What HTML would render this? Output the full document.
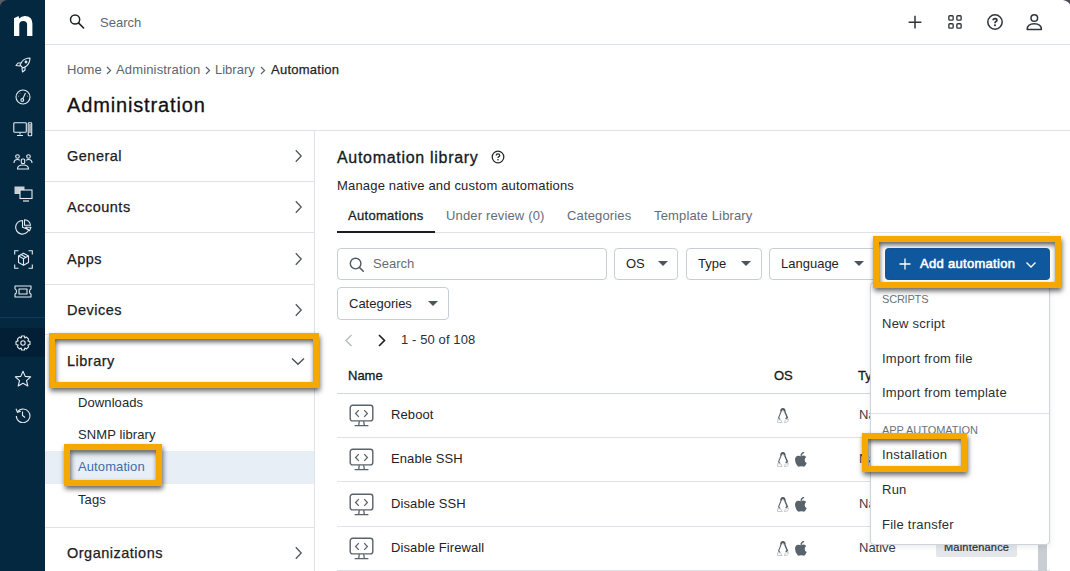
<!DOCTYPE html>
<html><head><meta charset="utf-8">
<style>
*{box-sizing:border-box;margin:0;padding:0}
html,body{width:1070px;height:571px;overflow:hidden;background:#fff;font-family:"Liberation Sans",sans-serif;color:#1f2328}
.abs{position:absolute}
#side{position:absolute;left:0;top:0;width:45px;height:571px;background:#032840}
#side svg{position:absolute}
#hdr{position:absolute;left:45px;top:0;width:1025px;height:45px;border-bottom:1px solid #dde2e8;background:#fff}
.t{position:absolute;white-space:nowrap;line-height:1}
.line{position:absolute;background:#dfe3e8}
.nav{position:absolute;left:67px;font-size:14.5px;font-weight:400;color:#1c2024;letter-spacing:0.5px;-webkit-text-stroke:0.25px #1c2024}
.sub{position:absolute;left:78px;font-size:13px;color:#23282d;letter-spacing:0.1px}
.chev{position:absolute}
.bc{font-size:13px;color:#5b6570}
.btn{position:absolute;border:1px solid #c9ced4;border-radius:4px;background:#fff}
.tri{position:absolute;width:0;height:0;border-left:5px solid transparent;border-right:5px solid transparent;border-top:5px solid #4c555d}
.hl{position:absolute;border:6px solid #f5a900;box-shadow:1px 3px 5px rgba(0,0,0,.6), inset 1px 3px 5px rgba(0,0,0,.62)}
.mi{position:absolute;left:882px;font-size:13px;color:#2a2f35;letter-spacing:0.25px}
.row{position:absolute;left:348px;font-size:13px;color:#23282d;letter-spacing:0.05px}
</style></head><body>

<div id="side">
  <!-- logo n -->
  <svg style="left:13px;top:15px" width="20" height="22" viewBox="0 0 20 22">
    <path d="M1 3.2 L5.6 1 L6.1 3.4 Q8.4 0.9 11.8 0.9 Q19.4 0.9 19.4 8.6 L19.4 21 L14.1 21 L14.1 9.6 Q14.1 5.9 10.3 5.9 Q6.3 5.9 6.3 9.6 L6.3 21 L1 21 Z" fill="#fff"/>
  </svg>

  <!-- rocket -->
  <svg style="left:15px;top:57px" width="16" height="16" viewBox="0 0 16 16"><g fill="none" stroke="#e6ebef" stroke-width="1.1" stroke-linejoin="round"><path d="M15 1 Q10 1 7 4.5 L5 8 L8 11 L11.5 9 Q15 6 15 1 Z"/><path d="M6 6 L3 6 L1 8.5 L5 9"/><path d="M10 10 L10 13 L7.5 15 L7 11"/><circle cx="11" cy="5" r="0.9"/></g></svg>
  <!-- gauge -->
  <svg style="left:15px;top:89px" width="16" height="16" viewBox="0 0 16 16"><g fill="none" stroke="#e6ebef" stroke-width="1.1"><circle cx="8" cy="8" r="7"/><circle cx="7.3" cy="11" r="1.4"/><path d="M7.8 9.7 L10.5 4"/><path d="M3.5 7 L4 7.2 M12.5 7 L12 7.2 M5 4 L5.3 4.4"/></g></svg>
  <!-- devices -->
  <svg style="left:13px;top:122px" width="20" height="15" viewBox="0 0 20 15"><g fill="none" stroke="#e6ebef" stroke-width="1.1"><rect x="0.8" y="0.8" width="12.5" height="9.5" rx="0.8"/><path d="M7 10.5 V12.5 M4 13.5 H10"/><rect x="15.2" y="0.8" width="3.5" height="13" rx="0.8"/></g><rect x="15.8" y="2" width="2.3" height="9" fill="#9aa3ab"/></svg>
  <!-- people -->
  <svg style="left:13px;top:154px" width="20" height="16" viewBox="0 0 20 16"><g fill="none" stroke="#e6ebef" stroke-width="1.1"><circle cx="4.5" cy="2.5" r="1.8"/><circle cx="15.5" cy="2.5" r="1.8"/><path d="M1 9 Q1 5.5 4.5 5.5 Q6 5.5 6.8 6.3"/><path d="M19 9 Q19 5.5 15.5 5.5 Q14 5.5 13.2 6.3"/><rect x="8.3" y="5" width="3.4" height="4.5" rx="1"/><path d="M4.5 15 Q4.5 11 10 11 Q15.5 11 15.5 15 Z"/></g></svg>
  <!-- windows -->
  <svg style="left:14px;top:186px" width="19" height="16" viewBox="0 0 19 16"><rect x="0.5" y="0.5" width="10" height="7.5" fill="#c9d0d6"/><rect x="6" y="4" width="12" height="8.5" fill="#032840" stroke="#e6ebef" stroke-width="1.1"/><path d="M9 15 H15" stroke="#e6ebef" stroke-width="1.2"/></svg>
  <!-- pie -->
  <svg style="left:15px;top:219px" width="17" height="16" viewBox="0 0 17 16"><g fill="none" stroke="#e6ebef" stroke-width="1.1" stroke-linejoin="round"><path d="M7.5 1.5 A6.8 6.8 0 1 0 13.8 10.8 L7.5 8.3 Z"/><path d="M9.5 0.7 A6.5 6.5 0 0 1 15.5 6.3 L9.5 6.3 Z"/><path d="M10.5 8.3 L16 8.3 L14.5 11.8 Z"/></g></svg>
  <!-- box -->
  <svg style="left:14px;top:250px" width="19" height="19" viewBox="0 0 19 19"><g fill="none" stroke="#e6ebef" stroke-width="1.1"><path d="M0.7 4.5 V0.7 H4.5 M14.5 0.7 H18.3 V4.5 M18.3 14.5 V18.3 H14.5 M4.5 18.3 H0.7 V14.5"/><path d="M9.5 3.3 L14.5 6 V12.5 L9.5 15.3 L4.5 12.5 V6 Z" stroke-linejoin="round"/><path d="M4.5 6 L9.5 8.7 L14.5 6 M9.5 8.7 V15.3 M7 4.6 L12 7.4"/></g></svg>
  <!-- ticket -->
  <svg style="left:14px;top:285px" width="18" height="13" viewBox="0 0 18 13"><g fill="none" stroke="#e6ebef" stroke-width="1.1" stroke-linejoin="round"><path d="M1 1 H17 V4 Q15.5 4.3 15.5 6.5 Q15.5 8.7 17 9 V12 H1 V9 Q2.5 8.7 2.5 6.5 Q2.5 4.3 1 4 Z"/><rect x="5" y="4" width="8" height="5"/></g></svg>
  <div style="position:absolute;left:0;top:317px;width:45px;height:1px;background:#0f3b5c"></div>
  <div style="position:absolute;left:0;top:328px;width:45px;height:29px;background:#021f35"></div>
  <!-- gear -->
  <svg style="left:15px;top:335px" width="16" height="16" viewBox="0 0 16 16"><g fill="none" stroke="#e6ebef" stroke-width="1.1" stroke-linejoin="round"><path d="M6.6 1 H9.4 L9.9 3 L11.6 2.1 L13.6 4.1 L12.9 5.9 L15 6.5 V9.5 L12.9 10.1 L13.6 11.9 L11.6 13.9 L9.9 13 L9.4 15 H6.6 L6.1 13 L4.4 13.9 L2.4 11.9 L3.1 10.1 L1 9.5 V6.5 L3.1 5.9 L2.4 4.1 L4.4 2.1 L6.1 3 Z"/><circle cx="8" cy="8" r="2.2"/></g></svg>
  <!-- star -->
  <svg style="left:14px;top:370px" width="18" height="18" viewBox="0 0 18 18"><path d="M9 1.3 L11.2 6.4 L16.7 6.9 L12.5 10.6 L13.8 16 L9 13.2 L4.2 16 L5.5 10.6 L1.3 6.9 L6.8 6.4 Z" fill="none" stroke="#e6ebef" stroke-width="1.1" stroke-linejoin="round"/></svg>
  <!-- history -->
  <svg style="left:15px;top:407px" width="16" height="16" viewBox="0 0 16 16"><g fill="none" stroke="#e6ebef" stroke-width="1.1"><path d="M2.5 5 A6.8 6.8 0 1 1 1.3 9"/><path d="M1 1.8 L2.5 5.3 L5.8 4.2"/><path d="M7.5 4.5 V8.5 L10 10.5"/></g></svg>
</div>

<div id="hdr"></div>
<!-- header right icons -->
<svg class="abs" style="left:907px;top:14px" width="16" height="16" viewBox="0 0 16 16"><path d="M8 1.8 V14.6 M1.6 8.2 H14.4" stroke="#2f353a" stroke-width="1.5"/></svg>
<svg class="abs" style="left:947px;top:14px" width="16" height="16" viewBox="0 0 16 16"><g fill="none" stroke="#2f353a" stroke-width="1.35"><rect x="1.85" y="1.75" width="4.3" height="4.3" rx="0.9"/><rect x="9.85" y="1.75" width="4.3" height="4.3" rx="0.9"/><rect x="1.85" y="9.75" width="4.3" height="4.3" rx="0.9"/><rect x="9.85" y="9.75" width="4.3" height="4.3" rx="0.9"/></g></svg>
<svg class="abs" style="left:986px;top:13px" width="18" height="18" viewBox="0 0 18 18"><circle cx="9" cy="9" r="7.2" fill="none" stroke="#2f353a" stroke-width="1.5"/><path d="M7.1 7.3 Q7.1 5.6 9 5.6 Q10.9 5.6 10.9 7.2 Q10.9 8.1 9.9 8.6 Q9 9.1 9 10.2" fill="none" stroke="#2f353a" stroke-width="1.7"/><circle cx="9" cy="12.3" r="1.05" fill="#2f353a"/></svg>
<svg class="abs" style="left:1026px;top:13px" width="17" height="18" viewBox="0 0 17 18"><circle cx="8.3" cy="5" r="3.3" fill="none" stroke="#2f353a" stroke-width="1.5"/><path d="M1.2 16.6 Q1.2 10.8 8.3 10.8 Q15.4 10.8 15.4 16.6 Z" fill="none" stroke="#2f353a" stroke-width="1.5" stroke-linejoin="round"/></svg>

<!-- header search -->
<svg class="abs" style="left:69px;top:13px" width="17" height="17" viewBox="0 0 17 17"><circle cx="6.1" cy="6.5" r="4.6" fill="none" stroke="#1e2226" stroke-width="1.5"/><path d="M9.5 9.9 L14.6 15" stroke="#1e2226" stroke-width="1.6" stroke-linecap="round"/></svg>
<div class="t" style="left:100px;top:16px;font-size:13px;color:#5d6670">Search</div>

<!-- breadcrumb -->
<div class="t bc" style="left:67px;top:63px">Home</div>
<svg class="abs" style="left:106px;top:66px" width="6" height="9" viewBox="0 0 6 9"><path d="M1 1 L4.6 4.5 L1 8" fill="none" stroke="#5b6570" stroke-width="1.2"/></svg>
<div class="t bc" style="left:116px;top:63px;letter-spacing:0.15px">Administration</div>
<svg class="abs" style="left:205px;top:66px" width="6" height="9" viewBox="0 0 6 9"><path d="M1 1 L4.6 4.5 L1 8" fill="none" stroke="#5b6570" stroke-width="1.2"/></svg>
<div class="t bc" style="left:215px;top:63px">Library</div>
<svg class="abs" style="left:260px;top:66px" width="6" height="9" viewBox="0 0 6 9"><path d="M1 1 L4.6 4.5 L1 8" fill="none" stroke="#5b6570" stroke-width="1.2"/></svg>
<div class="t bc" style="left:271px;top:63px;color:#1f2328;letter-spacing:0.25px;-webkit-text-stroke:0.25px #1f2328">Automation</div>
<div class="t" style="left:67px;top:95px;font-size:20px;color:#111;letter-spacing:0.85px;-webkit-text-stroke:0.3px #111">Administration</div>

<div class="line" style="left:45px;top:130px;width:1025px;height:1px"></div>
<div class="line" style="left:314px;top:131px;width:1px;height:440px"></div>

<!-- left nav -->
<div class="nav t" style="top:149px">General</div>
<div class="line" style="left:45px;top:181px;width:269px;height:1px"></div>
<div class="nav t" style="top:200px">Accounts</div>
<div class="line" style="left:45px;top:232px;width:269px;height:1px"></div>
<div class="nav t" style="top:252px">Apps</div>
<div class="line" style="left:45px;top:284px;width:269px;height:1px"></div>
<div class="nav t" style="top:303px">Devices</div>
<div class="line" style="left:45px;top:334px;width:269px;height:1px"></div>
<div class="nav t" style="top:354px">Library</div>
<div class="sub t" style="top:396px">Downloads</div>
<div class="sub t" style="top:428px">SNMP library</div>
<div class="abs" style="left:45px;top:451px;width:269px;height:33px;background:#e8eef6"></div>
<div class="sub t" style="top:460px;color:#3a6eae">Automation</div>
<div class="sub t" style="top:493px">Tags</div>
<div class="line" style="left:45px;top:527px;width:269px;height:1px"></div>
<div class="nav t" style="top:546px">Organizations</div>

<!-- nav chevrons -->
<svg class="abs" style="left:294px;top:149px" width="9" height="14" viewBox="0 0 9 14"><path d="M1.8 1.3 L7.2 7 L1.8 12.7" fill="none" stroke="#4f575f" stroke-width="1.3"/></svg>
<svg class="abs" style="left:294px;top:200px" width="9" height="14" viewBox="0 0 9 14"><path d="M1.8 1.3 L7.2 7 L1.8 12.7" fill="none" stroke="#4f575f" stroke-width="1.3"/></svg>
<svg class="abs" style="left:294px;top:252px" width="9" height="14" viewBox="0 0 9 14"><path d="M1.8 1.3 L7.2 7 L1.8 12.7" fill="none" stroke="#4f575f" stroke-width="1.3"/></svg>
<svg class="abs" style="left:294px;top:303px" width="9" height="14" viewBox="0 0 9 14"><path d="M1.8 1.3 L7.2 7 L1.8 12.7" fill="none" stroke="#4f575f" stroke-width="1.3"/></svg>
<svg class="abs" style="left:294px;top:546px" width="9" height="14" viewBox="0 0 9 14"><path d="M1.8 1.3 L7.2 7 L1.8 12.7" fill="none" stroke="#4f575f" stroke-width="1.3"/></svg>
<svg class="abs" style="left:291px;top:357px" width="14" height="9" viewBox="0 0 14 9"><path d="M1 1.5 L7 7.3 L13 1.5" fill="none" stroke="#4a525a" stroke-width="1.4"/></svg>

<!-- main content -->
<div class="t" style="left:337px;top:150px;font-size:16px;color:#15191d;letter-spacing:0.7px;-webkit-text-stroke:0.3px #15191d">Automation library</div>
<svg class="abs" style="left:491px;top:150px" width="14" height="14" viewBox="0 0 14 14"><circle cx="7" cy="7" r="5.8" fill="none" stroke="#22272b" stroke-width="1.25"/><path d="M5.3 5.6 Q5.3 3.9 7 3.9 Q8.7 3.9 8.7 5.4 Q8.7 6.2 7.8 6.7 Q7 7.1 7 8" fill="none" stroke="#22272b" stroke-width="1.3"/><circle cx="7" cy="9.8" r="0.8" fill="#22272b"/></svg>
<div class="t" style="left:337px;top:179px;font-size:13px;color:#1f2328;letter-spacing:0.18px">Manage native and custom automations</div>

<!-- tabs -->
<div class="t" style="left:348px;top:209px;font-size:13px;color:#1b1f23;letter-spacing:0.3px;-webkit-text-stroke:0.3px #1b1f23">Automations</div>
<div class="t" style="left:446px;top:209px;font-size:13px;color:#646d76;letter-spacing:0.15px">Under review (0)</div>
<div class="t" style="left:567px;top:209px;font-size:13px;color:#646d76;letter-spacing:0.15px">Categories</div>
<div class="t" style="left:654px;top:209px;font-size:13px;color:#646d76;letter-spacing:0.15px">Template Library</div>
<div class="line" style="left:337px;top:232px;width:713px;height:1px"></div>
<div class="abs" style="left:337px;top:231px;width:98px;height:2px;background:#1b1f23"></div>

<!-- filters -->
<div class="btn" style="left:337px;top:248px;width:270px;height:32px"></div>
<svg class="abs" style="left:349px;top:257px" width="16" height="16" viewBox="0 0 16 16"><circle cx="6.6" cy="6.6" r="5.3" fill="none" stroke="#4f5860" stroke-width="1.4"/><path d="M10.5 10.5 L14.3 14.3" stroke="#4f5860" stroke-width="1.5" stroke-linecap="round"/></svg>
<div class="t" style="left:373px;top:257px;font-size:13px;color:#646d76">Search</div>

<div class="btn" style="left:614px;top:248px;width:64px;height:32px"></div>
<div class="t" style="left:626px;top:257px;font-size:13px;color:#1f2328">OS</div>
<div class="tri" style="left:658px;top:261px"></div>
<div class="btn" style="left:686px;top:248px;width:76px;height:32px"></div>
<div class="t" style="left:698px;top:257px;font-size:13px;color:#1f2328">Type</div>
<div class="tri" style="left:741px;top:261px"></div>
<div class="btn" style="left:769px;top:248px;width:108px;height:32px"></div>
<div class="t" style="left:781px;top:257px;font-size:13px;color:#1f2328">Language</div>
<div class="tri" style="left:854px;top:261px"></div>

<div class="btn" style="left:337px;top:287px;width:112px;height:33px"></div>
<div class="t" style="left:349px;top:297px;font-size:13px;color:#1f2328">Categories</div>
<div class="tri" style="left:428px;top:301px"></div>

<!-- pagination -->
<svg class="abs" style="left:344px;top:334px" width="10" height="13" viewBox="0 0 10 13"><path d="M7.5 1 L2 6.5 L7.5 12" fill="none" stroke="#b4bac1" stroke-width="1.4"/></svg>
<svg class="abs" style="left:377px;top:334px" width="10" height="13" viewBox="0 0 10 13"><path d="M2 1 L7.5 6.5 L2 12" fill="none" stroke="#1b1f23" stroke-width="1.6"/></svg>
<div class="t" style="left:401px;top:333px;font-size:13px;color:#2a3036;letter-spacing:0.1px">1 - 50 of 108</div>

<!-- table -->
<div class="t" style="left:348px;top:369px;font-size:13px;color:#15191d;-webkit-text-stroke:0.3px #15191d">Name</div>
<div class="t" style="left:774px;top:369px;font-size:13px;color:#15191d;-webkit-text-stroke:0.3px #15191d">OS</div>
<div class="t" style="left:858px;top:369px;font-size:13px;color:#15191d;-webkit-text-stroke:0.3px #15191d">Type</div>
<div class="line" style="left:337px;top:393px;width:713px;height:1px;background:#d3d8de"></div>
<svg class="abs" style="left:349px;top:404px" width="25" height="23" viewBox="0 0 25 23"><rect x="1.2" y="1.3" width="22.6" height="15.6" rx="2.4" fill="none" stroke="#59636c" stroke-width="1.4"/><path d="M9.8 6.1 L6.6 9.5 L9.8 12.9 M15.2 6.1 L18.4 9.5 L15.2 12.9" fill="none" stroke="#59636c" stroke-width="1.25"/><path d="M10.3 17.2 L9.7 21.3 M14.7 17.2 L15.3 21.3 M5.6 21.6 H19.4" fill="none" stroke="#59636c" stroke-width="1.3"/></svg>
<div class="t" style="left:391px;top:408px;font-size:13px;color:#1f2328;letter-spacing:0.1px">Reboot</div>
<div class="t" style="left:859px;top:408px;font-size:13px;color:#3a4148">Native</div>
<div class="line" style="left:337px;top:437px;width:713px;height:1px;background:#dfe3e8"></div>
<svg class="abs" style="left:776px;top:408px" width="14" height="16" viewBox="0 0 14 16"><path d="M5.2 3.6 Q5 1.1 6.9 1.1 Q8.8 1.1 8.6 3.6" stroke="#4f5961" stroke-width="2" fill="none"/><path d="M5.1 3.5 L2.6 9.8 L4.2 11.6" stroke="#5d6770" stroke-width="1.1" fill="none"/><path d="M8.7 3.5 L11.4 9.6 L9.6 10.6" stroke="#515b63" stroke-width="1.4" fill="none"/><path d="M1.5 11.6 L1.6 14.5 L6.2 14.5 L4.6 12 Z" fill="none" stroke="#c2c7cc" stroke-width="0.9"/><path d="M12.5 11 L11.8 13.8 L8.4 14.8 L9.2 12.2 Z" fill="none" stroke="#c2c7cc" stroke-width="0.9"/></svg>
<svg class="abs" style="left:349px;top:448px" width="25" height="23" viewBox="0 0 25 23"><rect x="1.2" y="1.3" width="22.6" height="15.6" rx="2.4" fill="none" stroke="#59636c" stroke-width="1.4"/><path d="M9.8 6.1 L6.6 9.5 L9.8 12.9 M15.2 6.1 L18.4 9.5 L15.2 12.9" fill="none" stroke="#59636c" stroke-width="1.25"/><path d="M10.3 17.2 L9.7 21.3 M14.7 17.2 L15.3 21.3 M5.6 21.6 H19.4" fill="none" stroke="#59636c" stroke-width="1.3"/></svg>
<div class="t" style="left:391px;top:452px;font-size:13px;color:#1f2328;letter-spacing:0.1px">Enable SSH</div>
<div class="t" style="left:859px;top:452px;font-size:13px;color:#3a4148">Native</div>
<div class="line" style="left:337px;top:481px;width:713px;height:1px;background:#dfe3e8"></div>
<svg class="abs" style="left:776px;top:452px" width="14" height="16" viewBox="0 0 14 16"><path d="M5.2 3.6 Q5 1.1 6.9 1.1 Q8.8 1.1 8.6 3.6" stroke="#4f5961" stroke-width="2" fill="none"/><path d="M5.1 3.5 L2.6 9.8 L4.2 11.6" stroke="#5d6770" stroke-width="1.1" fill="none"/><path d="M8.7 3.5 L11.4 9.6 L9.6 10.6" stroke="#515b63" stroke-width="1.4" fill="none"/><path d="M1.5 11.6 L1.6 14.5 L6.2 14.5 L4.6 12 Z" fill="none" stroke="#c2c7cc" stroke-width="0.9"/><path d="M12.5 11 L11.8 13.8 L8.4 14.8 L9.2 12.2 Z" fill="none" stroke="#c2c7cc" stroke-width="0.9"/></svg>
<svg class="abs" style="left:794px;top:452px" width="14" height="16" viewBox="0 0 14 16"><path d="M7 4.3 Q5.8 3.6 4.2 3.7 Q1.2 4 1 7.6 Q1 11.5 3.5 14 Q4.6 15 5.6 14.6 Q6.6 14.2 7.4 14.3 Q8.2 14.2 9.2 14.6 Q10.2 15 11.2 13.8 Q12.3 12.4 12.7 11.1 Q10.6 10.2 10.7 7.8 Q10.8 6 12.2 5.1 Q11.2 3.6 9.5 3.6 Q8.2 3.7 7 4.3 Z" fill="#59636c"/><path d="M7.2 3.2 Q7.6 1.2 9.4 0.6" stroke="#59636c" stroke-width="1.5" fill="none" stroke-linecap="round"/></svg>
<svg class="abs" style="left:349px;top:493px" width="25" height="23" viewBox="0 0 25 23"><rect x="1.2" y="1.3" width="22.6" height="15.6" rx="2.4" fill="none" stroke="#59636c" stroke-width="1.4"/><path d="M9.8 6.1 L6.6 9.5 L9.8 12.9 M15.2 6.1 L18.4 9.5 L15.2 12.9" fill="none" stroke="#59636c" stroke-width="1.25"/><path d="M10.3 17.2 L9.7 21.3 M14.7 17.2 L15.3 21.3 M5.6 21.6 H19.4" fill="none" stroke="#59636c" stroke-width="1.3"/></svg>
<div class="t" style="left:391px;top:497px;font-size:13px;color:#1f2328;letter-spacing:0.1px">Disable SSH</div>
<div class="t" style="left:859px;top:497px;font-size:13px;color:#3a4148">Native</div>
<div class="line" style="left:337px;top:526px;width:713px;height:1px;background:#dfe3e8"></div>
<svg class="abs" style="left:776px;top:497px" width="14" height="16" viewBox="0 0 14 16"><path d="M5.2 3.6 Q5 1.1 6.9 1.1 Q8.8 1.1 8.6 3.6" stroke="#4f5961" stroke-width="2" fill="none"/><path d="M5.1 3.5 L2.6 9.8 L4.2 11.6" stroke="#5d6770" stroke-width="1.1" fill="none"/><path d="M8.7 3.5 L11.4 9.6 L9.6 10.6" stroke="#515b63" stroke-width="1.4" fill="none"/><path d="M1.5 11.6 L1.6 14.5 L6.2 14.5 L4.6 12 Z" fill="none" stroke="#c2c7cc" stroke-width="0.9"/><path d="M12.5 11 L11.8 13.8 L8.4 14.8 L9.2 12.2 Z" fill="none" stroke="#c2c7cc" stroke-width="0.9"/></svg>
<svg class="abs" style="left:794px;top:497px" width="14" height="16" viewBox="0 0 14 16"><path d="M7 4.3 Q5.8 3.6 4.2 3.7 Q1.2 4 1 7.6 Q1 11.5 3.5 14 Q4.6 15 5.6 14.6 Q6.6 14.2 7.4 14.3 Q8.2 14.2 9.2 14.6 Q10.2 15 11.2 13.8 Q12.3 12.4 12.7 11.1 Q10.6 10.2 10.7 7.8 Q10.8 6 12.2 5.1 Q11.2 3.6 9.5 3.6 Q8.2 3.7 7 4.3 Z" fill="#59636c"/><path d="M7.2 3.2 Q7.6 1.2 9.4 0.6" stroke="#59636c" stroke-width="1.5" fill="none" stroke-linecap="round"/></svg>
<svg class="abs" style="left:349px;top:537px" width="25" height="23" viewBox="0 0 25 23"><rect x="1.2" y="1.3" width="22.6" height="15.6" rx="2.4" fill="none" stroke="#59636c" stroke-width="1.4"/><path d="M9.8 6.1 L6.6 9.5 L9.8 12.9 M15.2 6.1 L18.4 9.5 L15.2 12.9" fill="none" stroke="#59636c" stroke-width="1.25"/><path d="M10.3 17.2 L9.7 21.3 M14.7 17.2 L15.3 21.3 M5.6 21.6 H19.4" fill="none" stroke="#59636c" stroke-width="1.3"/></svg>
<div class="t" style="left:391px;top:541px;font-size:13px;color:#1f2328;letter-spacing:0.1px">Disable Firewall</div>
<div class="t" style="left:859px;top:541px;font-size:13px;color:#3a4148">Native</div>
<div class="line" style="left:337px;top:570px;width:713px;height:1px;background:#dfe3e8"></div>
<svg class="abs" style="left:776px;top:541px" width="14" height="16" viewBox="0 0 14 16"><path d="M5.2 3.6 Q5 1.1 6.9 1.1 Q8.8 1.1 8.6 3.6" stroke="#4f5961" stroke-width="2" fill="none"/><path d="M5.1 3.5 L2.6 9.8 L4.2 11.6" stroke="#5d6770" stroke-width="1.1" fill="none"/><path d="M8.7 3.5 L11.4 9.6 L9.6 10.6" stroke="#515b63" stroke-width="1.4" fill="none"/><path d="M1.5 11.6 L1.6 14.5 L6.2 14.5 L4.6 12 Z" fill="none" stroke="#c2c7cc" stroke-width="0.9"/><path d="M12.5 11 L11.8 13.8 L8.4 14.8 L9.2 12.2 Z" fill="none" stroke="#c2c7cc" stroke-width="0.9"/></svg>
<svg class="abs" style="left:794px;top:541px" width="14" height="16" viewBox="0 0 14 16"><path d="M7 4.3 Q5.8 3.6 4.2 3.7 Q1.2 4 1 7.6 Q1 11.5 3.5 14 Q4.6 15 5.6 14.6 Q6.6 14.2 7.4 14.3 Q8.2 14.2 9.2 14.6 Q10.2 15 11.2 13.8 Q12.3 12.4 12.7 11.1 Q10.6 10.2 10.7 7.8 Q10.8 6 12.2 5.1 Q11.2 3.6 9.5 3.6 Q8.2 3.7 7 4.3 Z" fill="#59636c"/><path d="M7.2 3.2 Q7.6 1.2 9.4 0.6" stroke="#59636c" stroke-width="1.5" fill="none" stroke-linecap="round"/></svg>
<div class="abs" style="left:936px;top:540px;width:81px;height:17px;background:#e3e7eb;border-radius:2px"></div>
<div class="t" style="left:944px;top:542px;font-size:11px;color:#2a3036;letter-spacing:0.2px;-webkit-text-stroke:0.2px #2a3036">Maintenance</div>
<div class="abs" style="left:1038px;top:395px;width:9px;height:176px;background:#c9ced4"></div>

<!-- add automation button -->
<div class="abs" style="left:885px;top:248px;width:165px;height:32px;background:#10589e;border-radius:4px"></div>
<svg class="abs" style="left:898px;top:257px" width="14" height="14" viewBox="0 0 14 14"><path d="M7 1.5 V12.5 M1.5 7 H12.5" stroke="#fff" stroke-width="1.3"/></svg>
<div class="t" style="left:920px;top:257px;font-size:13px;color:#fff;letter-spacing:0.3px;-webkit-text-stroke:0.55px #fff">Add automation</div>
<svg class="abs" style="left:1025px;top:261px" width="12" height="8" viewBox="0 0 12 8"><path d="M1.5 1.5 L6 6 L10.5 1.5" fill="none" stroke="#fff" stroke-width="1.3"/></svg>

<!-- dropdown -->
<div class="abs" style="left:870px;top:282px;width:180px;height:263px;background:#fff;border:1px solid #cfd4da;border-radius:4px;box-shadow:0 2px 6px rgba(0,0,0,.08)"></div>
<div class="t" style="left:882px;top:294px;font-size:11px;color:#6b737b;letter-spacing:-0.2px">SCRIPTS</div>
<div class="mi t" style="top:317px">New script</div>
<div class="mi t" style="top:352px">Import from file</div>
<div class="mi t" style="top:386px">Import from template</div>
<div class="line" style="left:871px;top:413px;width:178px;height:1px"></div>
<div class="t" style="left:882px;top:425px;font-size:11px;color:#6b737b;letter-spacing:-0.05px">APP AUTOMATION</div>
<div class="mi t" style="top:448px">Installation</div>
<div class="mi t" style="top:483px">Run</div>
<div class="mi t" style="top:518px">File transfer</div>

<!-- highlights -->
<div class="hl" style="left:49px;top:333px;width:270px;height:55px"></div>
<div class="hl" style="left:64px;top:444px;width:98px;height:42px"></div>
<div class="hl" style="left:873px;top:236px;width:188px;height:52px"></div>
<div class="hl" style="left:862px;top:433px;width:105px;height:39px"></div>

<svg class="abs" style="left:0;top:0" width="10" height="10" viewBox="0 0 10 10"><path d="M0 0 H7 A7.5 7.5 0 0 0 0 7.5 Z" fill="#5c5d62"/></svg>
<svg class="abs" style="left:1060px;top:0" width="10" height="8" viewBox="0 0 10 8"><path d="M3 0 H10 V4.5 Q8.5 1.3 3 0 Z" fill="#46494f"/></svg>
</body></html>
